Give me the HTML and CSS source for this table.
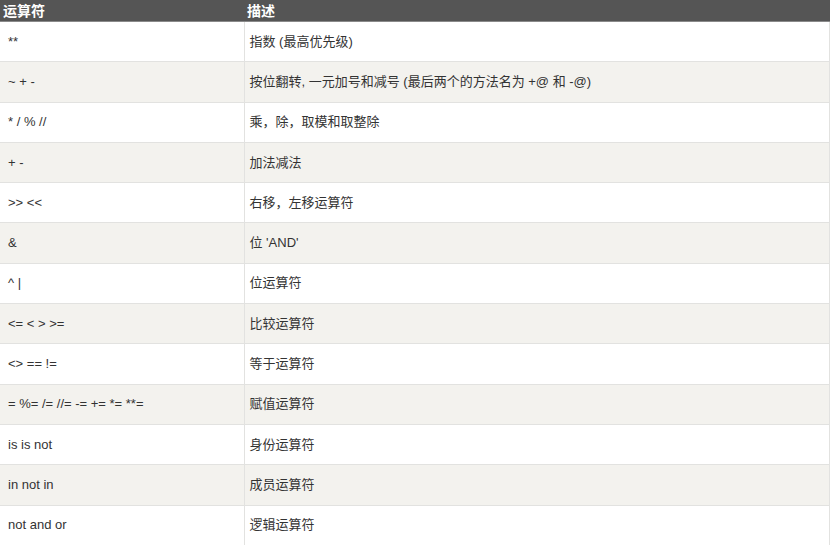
FILE: index.html
```html
<!DOCTYPE html>
<html lang="zh-CN">
<head>
<meta charset="utf-8">
<title>Python 运算符优先级</title>
<link rel="stylesheet" href="styles.css">
</head>
<body>
<table class="ops">
  <thead>
    <tr><th class="c1">运算符</th><th class="c2">描述</th></tr>
  </thead>
  <tbody>
    <tr><td>**</td><td>指数 (最高优先级)</td></tr>
    <tr><td>~ + -</td><td>按位翻转, 一元加号和减号 (最后两个的方法名为 +@ 和 -@)</td></tr>
    <tr><td>* / % //</td><td>乘，除，取模和取整除</td></tr>
    <tr><td>+ -</td><td>加法减法</td></tr>
    <tr><td>&gt;&gt; &lt;&lt;</td><td>右移，左移运算符</td></tr>
    <tr><td>&amp;</td><td>位 'AND'</td></tr>
    <tr><td>^ |</td><td>位运算符</td></tr>
    <tr><td>&lt;= &lt; &gt; &gt;=</td><td>比较运算符</td></tr>
    <tr><td>&lt;&gt; == !=</td><td>等于运算符</td></tr>
    <tr><td>= %= /= //= -= += *= **=</td><td>赋值运算符</td></tr>
    <tr><td>is is not</td><td>身份运算符</td></tr>
    <tr><td>in not in</td><td>成员运算符</td></tr>
    <tr><td>not and or</td><td>逻辑运算符</td></tr>
  </tbody>
</table>
</body>
</html>
```

FILE: styles.css
```css
html, body {
  margin: 0;
  padding: 0;
  background: #ffffff;
}

.ops {
  width: 830px;
  border-collapse: collapse;
  table-layout: fixed;
  font-family: "Liberation Sans", Arial, "Noto Sans CJK SC", sans-serif;
  font-size: 13px;
  color: #333333;
}

.ops th {
  background: #555555;
  color: #ffffff;
  font-size: 14px;
  font-weight: bold;
  text-align: left;
  height: 21px;
  padding: 0 3px;
  line-height: 20px;
  border-bottom: 1px solid #8a8a8a;
}

.ops th.c1 {
  width: 238px;
}

.ops td {
  height: 39.3px;
  padding: 0 0 0 5px;
  vertical-align: middle;
  border-bottom: 1px solid #e2e2e0;
  border-right: 1px solid #e2e2e0;
  line-height: 16px;
}

.ops td:first-child {
  padding-left: 8px;
}

.ops tbody tr:nth-child(even) td {
  background: #f3f2ee;
}
```
